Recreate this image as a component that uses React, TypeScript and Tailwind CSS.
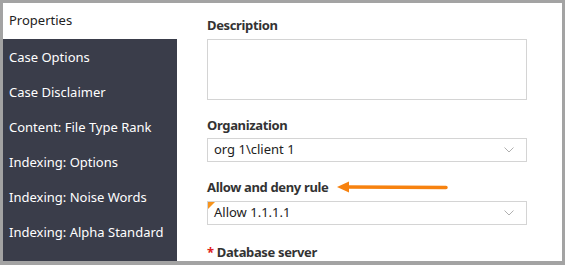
import React from "react";

const navItems = [
  "Case Options",
  "Case Disclaimer",
  "Content: File Type Rank",
  "Indexing: Options",
  "Indexing: Noise Words",
  "Indexing: Alpha Standard",
];

function Chevron() {
  return (
    <svg width="10" height="6" viewBox="0 0 10 6" className="shrink-0">
      <path d="M0.5 0.5 L5 5 L9.5 0.5" fill="none" stroke="#b0b0b0" strokeWidth="1" />
    </svg>
  );
}

function Select({ value, flagged }: { value: string; flagged?: boolean }) {
  return (
    <div className="relative flex h-[24px] w-[320px] items-center justify-between border border-[#d4d4d4] bg-white pl-[6px] pr-[12px]">
      {flagged && (
        <span className="absolute left-0 top-0 h-0 w-0 border-r-[7px] border-t-[7px] border-r-transparent border-t-[#f7941d]" />
      )}
      <span className="text-[13px] text-[#222]">{value}</span>
      <Chevron />
    </div>
  );
}

export default function App() {
  return (
    <div
      className="flex h-[265px] w-[565px] border-b-[4px] border-l-[3px] border-r-[3px] border-t-[3px] border-[#a3a3a3] bg-white"
      style={{ fontFamily: '"Noto Sans", "Open Sans", sans-serif' }}
    >
      <aside className="flex w-[174px] flex-col bg-[#3a3d4a]">
        <div className="flex h-[36px] items-center bg-white pl-[6px] text-[13px] text-[#222]">
          Properties
        </div>
        <ul className="flex flex-col pt-[1px]">
          {navItems.map((item) => (
            <li key={item} className="flex h-[35px] items-center pl-[6px] text-[13px] text-white">
              {item}
            </li>
          ))}
        </ul>
      </aside>
      <main className="flex flex-1 flex-col pl-[30px] pt-[13px]">
        <label className="text-[13px] font-bold leading-[18px] tracking-[-0.35px] text-[#333]">Description</label>
        <div className="mt-[5px] h-[62px] w-[320px] border border-[#d4d4d4]" />
        <label className="mt-[16px] text-[13px] font-bold leading-[18px] tracking-[-0.35px] text-[#333]">Organization</label>
        <div className="mt-[4px]">
          <Select value="org 1\client 1" />
        </div>
        <div className="mt-[16px] flex items-center">
          <label className="text-[13px] font-bold leading-[18px] tracking-[-0.35px] text-[#333]">Allow and deny rule</label>
          <svg width="111" height="12" viewBox="0 0 111 12" className="ml-[9px]">
            <path d="M0 6 L12 0.5 L12 11.5 Z" fill="#f7820f" />
            <path d="M10 6 L109 6.5" stroke="#f7820f" strokeWidth="3.5" strokeLinecap="round" />
          </svg>
        </div>
        <div className="mt-[5px]">
          <Select value="Allow 1.1.1.1" flagged />
        </div>
        <div className="mt-[18px] text-[13px] font-bold leading-[18px] tracking-[-0.35px] text-[#333]">
          <span className="text-[#e02020]">*</span> Database server
        </div>
      </main>
    </div>
  );
}
